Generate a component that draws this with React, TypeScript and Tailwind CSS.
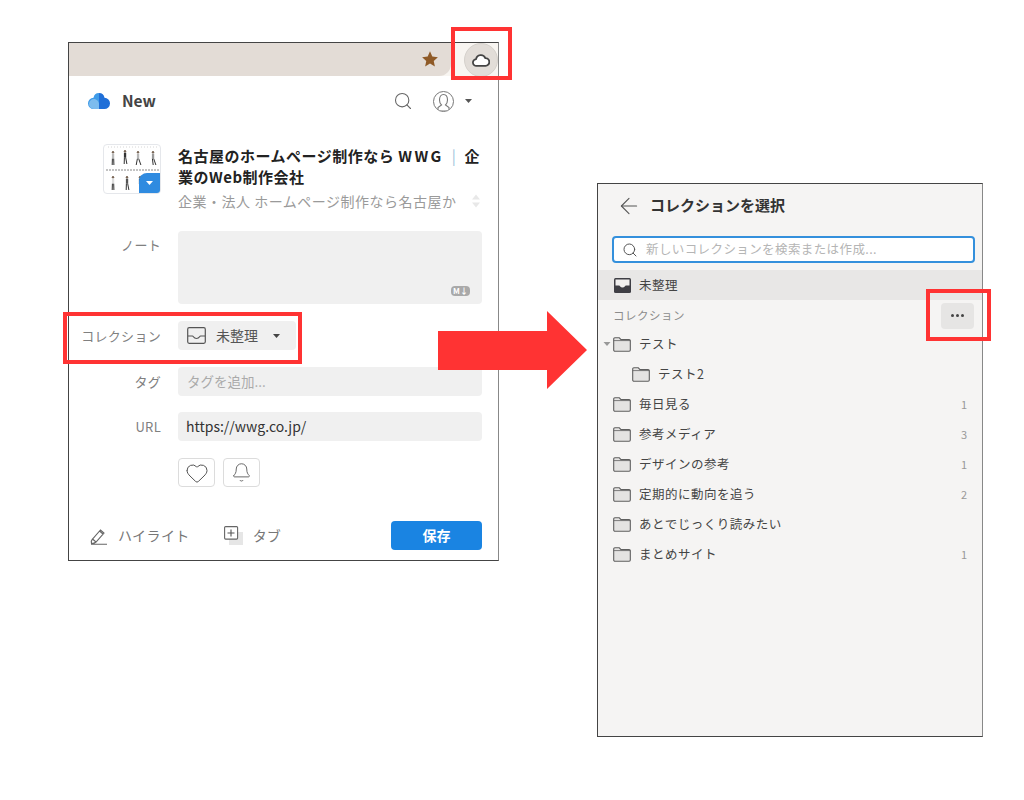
import { Search, Heart, Bell, ArrowLeft } from 'lucide-react';

const font = { fontFamily: '"Noto Sans CJK JP", "Noto Sans", sans-serif' };

const collections = [
  { name: '毎日見る', count: '1' },
  { name: '参考メディア', count: '3' },
  { name: 'デザインの参考', count: '1' },
  { name: '定期的に動向を追う', count: '2' },
  { name: 'あとでじっくり読みたい', count: '' },
  { name: 'まとめサイト', count: '1' },
];

const Caret = ({ className }: { className?: string }) => (
  <svg width="7" height="4" viewBox="0 0 7 4" className={className}>
    <path d="M0 0h7L3.5 4z" fill="currentColor" />
  </svg>
);

const FolderIcon = () => (
  <svg width="18" height="15" viewBox="0 0 18 15" className="shrink-0">
    <path d="M.7 13V2a1.2 1.2 0 0 1 1.2-1.2h4.4L8 2.6h8.1a1.2 1.2 0 0 1 1.2 1.2V13a1.2 1.2 0 0 1-1.2 1.2H1.9A1.2 1.2 0 0 1 .7 13z" fill="#e4e3e2" stroke="#5f5f5f" strokeWidth="1.1" />
    <path d="M.7 3.6h16.6" stroke="#5f5f5f" strokeWidth="0.8" />
  </svg>
);

// tiny figures in the page preview, l and r are the foot offsets
const Person = ({ x, y, l = 0, r = 0, top = '#a8a8a8' }: { x: number; y: number; l?: number; r?: number; top?: string }) => (
  <g transform={`translate(${x} ${y})`}>
    <circle cx="2" cy="1.3" r="1.2" fill="#7a6656" />
    <rect x="0.9" y="2.7" width="2.3" height="5" fill={top} />
    <path d={`M1.4 7.7L${1.2 + l} 14M2.700 7.700L${2.900 + r} 14`} stroke="#333" strokeWidth="1" />
  </g>
);

const Thumbnail = () => (
  <div className="relative w-[58px] h-[50px] shrink-0 rounded border border-gray-200 bg-white overflow-hidden">
    <svg width="58" height="50" viewBox="0 0 58 50">
      <path d="M4 2h50" stroke="#ccc" strokeWidth="0.8" strokeDasharray="1 2" />
      <Person x={7} y={6} top="#bbb" />
      <Person x={19} y={5} r={1} top="#333" />
      <Person x={32} y={6} l={-1} r={2} top="#b5b5b5" />
      <Person x={47} y={6} l={1} r={2} top="#999" />
      <path d="M2 25h54" stroke="#888" strokeWidth="1" strokeDasharray="2 1" />
      <Person x={7} y={31} top="#ddd" />
      <Person x={21} y={31} r={1} top="#555" />
      <Person x={34} y={31} l={1} top="#333" />
    </svg>
    <div className="absolute right-0 bottom-0 w-[21px] h-[20px] rounded-tl-lg bg-[#2f8be0] flex items-center justify-center text-white">
      <Caret />
    </div>
  </div>
);

const Label = ({ children }: { children: string }) => (
  <div className="w-[93px] pr-[1px] shrink-0 text-right text-[13px] tracking-[0.3px] text-[#808080]">{children}</div>
);

const PopupPanel = () => (
  <div className="w-[431px] h-[519px] shrink-0 flex flex-col border border-[#444] border-r-[#888] bg-white">
    {/* browser toolbar */}
    <div className="h-[33px] shrink-0 flex bg-[#f8f5f1]">
      <div className="flex-1 flex items-center justify-end rounded-br-xl bg-[#e3dcd6]">
        <svg width="18" height="18" viewBox="0 0 24 24" className="mr-[12px] -mt-[2px]">
          <path d="M12 1.8l3.1 6.9 7.4.8-5.500 5 1.500 7.400-6.500-3.800-6.500 3.800 1.500-7.400-5.500-5 7.400-.8z" fill="#8f5a27" />
        </svg>
      </div>
      <div className="w-[47px] flex items-center justify-end">
        <div className="w-[34px] h-[34px] rounded-full bg-[#e2ddd8] border border-[#d5d1cc] flex items-center justify-center">
          <svg width="18" height="14" viewBox="0 0 18 14">
            <path d="M4.600 12.900a3.400 3.400 0 0 1-.5-6.800 4.800 4.800 0 0 1 9.200-1 3.900 3.900 0 0 1 .2 7.800z" fill="white" stroke="#444" strokeWidth="1.800" strokeLinejoin="round" />
          </svg>
        </div>
      </div>
    </div>

    {/* header */}
    <div className="h-[50px] shrink-0 flex items-center pl-[19px] pr-[26px]">
      <svg width="22" height="18" viewBox="0 0 22 18">
        <path d="M11 1a5.600 5.600 0 0 1 5.500 4.800A5.600 5.600 0 0 1 16.300 17H11z" fill="#1f6fd8" />
        <path d="M11 1a5.600 5.600 0 0 0-5.500 4.800A5.600 5.600 0 0 0 5.700 17H11z" fill="#3f9be8" />
        <path d="M1 12a5 5 0 0 1 5-5c2.500 0 5 2.500 5 5v5H5.700A5 5 0 0 1 1 12z" fill="#7dbcee" />
      </svg>
      <div className="ml-[12px] text-[15.500px] font-bold text-[#444]">New</div>
      <Search size={20} strokeWidth={1.300} className="ml-auto text-[#666]" />
      <div className="ml-[20px] w-[21px] h-[21px] rounded-full border border-[#777] flex items-center justify-center overflow-hidden">
        <svg width="19" height="19" viewBox="0 0 19 19">
          <path d="M5.500 8c0-3 1.500-5.500 4-5.500s4 2.500 4 5.500-2 5-2 5l3.500 2.500v3.500H4v-3.500L7.500 13s-2-2-2-5z" fill="none" stroke="#777" strokeWidth="1.100" />
        </svg>
      </div>
      <Caret className="ml-[11px] text-[#555]" />
    </div>

    {/* page info */}
    <div className="flex pl-[34px] pr-[16px] pt-[18px]">
      <Thumbnail />
      <div className="ml-[17px] min-w-0 flex-1 pt-[1px]">
        <div className="text-[15px] leading-[21px] font-bold tracking-[0.5px] text-[#222]">
          名古屋のホームページ制作なら <span className="tracking-[2.500px]">WWG</span>
          <span className="mx-[8px] font-normal text-[#9cc3dc]">|</span>企業のWeb制作会社
        </div>
        <div className="mt-[4px] flex items-center justify-between text-[14px] leading-[20px] tracking-[0.500px] text-[#9a9a9a]">
          <span className="whitespace-nowrap">企業・法人 ホームページ制作なら名古屋か</span>
          <svg width="8" height="14" viewBox="0 0 8 14" className="shrink-0 text-[#e8e8e8] mr-[2px]">
            <path d="M0 5.500L4 .5l4 5zM0 8.500l4 5 4-5z" fill="currentColor" />
          </svg>
        </div>
      </div>
    </div>

    {/* form */}
    <div className="mt-[20px] flex flex-col pr-[16px]">
      <div className="flex gap-[16px]">
        <div className="pt-[4px]"><Label>ノート</Label></div>
        <div className="relative flex-1 h-[73px] rounded bg-[#f0f0f0]">
          <div className="absolute right-[12px] bottom-[8px] w-[19px] h-[10px] rounded-sm bg-[#a9a9a9] text-white flex items-center justify-center text-[8px] leading-none font-bold">M↓</div>
        </div>
      </div>
      <div className="mt-[17px] flex items-center gap-[16px]">
        <Label>コレクション</Label>
        <div className="w-[118px] h-[29px] rounded bg-[#f0f0f0] flex items-center pl-[9px]">
          <svg width="19" height="17" viewBox="0 0 19 17">
            <rect x="0.700" y="0.700" width="17.600" height="15.600" rx="1.500" fill="none" stroke="#555" strokeWidth="1.200" />
            <path d="M1 9h4.500c1 0 1 2.500 4 2.500s3-2.500 4-2.500H18" fill="none" stroke="#555" strokeWidth="1.200" />
          </svg>
          <span className="ml-[10px] text-[14px] text-[#555]">未整理</span>
          <Caret className="ml-[15px] text-[#444]" />
        </div>
      </div>
      <div className="mt-[17px] flex items-center gap-[16px]">
        <Label>タグ</Label>
        <div className="flex-1 h-[29px] rounded bg-[#f0f0f0] flex items-center pl-[9px] text-[13.500px] text-[#aaa]">タグを追加...</div>
      </div>
      <div className="mt-[16px] flex items-center gap-[16px]">
        <Label>URL</Label>
        <div className="flex-1 h-[29px] rounded bg-[#f0f0f0] flex items-center pl-[8px] text-[14px] text-[#333]">https://wwg.co.jp/</div>
      </div>
      <div className="mt-[17px] pl-[109px] flex gap-[8px]">
        <div className="w-[37px] h-[29px] rounded border border-[#dcdcdc] flex items-center justify-center text-[#555]">
          <Heart size={24} strokeWidth={1} />
        </div>
        <div className="w-[37px] h-[29px] rounded border border-[#dcdcdc] flex items-center justify-center text-[#555]">
          <Bell size={21} strokeWidth={1} />
        </div>
      </div>
    </div>

    {/* footer */}
    <div className="mt-[34px] flex items-center pl-[21px] pr-[16px]">
      <svg width="18" height="18" viewBox="0 0 18 18">
        <path d="M1.500 16.500c-.5-2 0-3.500 1-4.500l8-9 3.500 3-8 9c-1 1-2.500 1.500-4.500 1.500zM2.500 12l3.500 3M9.500 4l3.500 3M1 17.300h16" fill="none" stroke="#666" strokeWidth="1.100" />
      </svg>
      <span className="ml-[10px] text-[14px] tracking-[0.4px] text-[#777]">ハイライト</span>
      <svg width="19" height="19" viewBox="0 0 19 19" className="ml-[34px]">
        <rect x="5" y="6" width="14" height="13" fill="#e6e6e6" />
        <rect x="0.600" y="0.600" width="13" height="12.500" rx="1" fill="white" stroke="#666" strokeWidth="1.100" />
        <path d="M7 3.500v7M3.500 7h7" stroke="#555" strokeWidth="1.100" />
      </svg>
      <span className="ml-[10px] text-[14px] text-[#777]">タブ</span>
      <div className="ml-auto w-[91px] h-[29px] rounded bg-[#1a84e2] flex items-center justify-center text-[14px] font-bold text-white">保存</div>
    </div>
  </div>
);

const Row = ({ name, count }: { name: string; count?: string }) => (
  <div className="h-[30px] flex items-center pl-[15px] pr-[15px]">
    <FolderIcon />
    <span className="ml-[8px] text-[12.500px] tracking-[0.5px] text-[#444]">{name}</span>
    <span className="ml-auto text-[11px] text-[#999]">{count}</span>
  </div>
);

const CollectionPanel = () => (
  <div className="mt-[141px] w-[386px] h-[554px] shrink-0 flex flex-col border border-[#444] border-r-[#888] bg-[#f5f4f3]">
    <div className="h-[52px] shrink-0 flex items-center pl-[18px] pb-[9px]">
      <ArrowLeft size={26} strokeWidth={1} className="text-[#555]" />
      <span className="ml-[8px] text-[15px] font-bold text-[#333]">コレクションを選択</span>
    </div>
    <div className="ml-[14px] mr-[7px] h-[27px] shrink-0 flex items-center rounded border-2 border-[#3490dc] bg-white pl-[8px]">
      <Search size={16} strokeWidth={1.500} className="text-[#555]" />
      <span className="ml-[8px] text-[12.500px] tracking-[0.4px] text-[#b5b5b5]">新しいコレクションを検索または作成...</span>
    </div>
    <div className="mt-[7px] h-[30px] shrink-0 flex items-center bg-[#e8e7e6] pl-[16px]">
      <svg width="17" height="15" viewBox="0 0 17 15">
        <rect width="17" height="15" rx="1.500" fill="#3f3f45" />
        <path d="M1.500 1.500h14v6h-3.500c-1 0-1.200 2-3.500 2s-2.500-2-3.500-2H1.500z" fill="#f1f0ef" />
      </svg>
      <span className="ml-[8px] text-[12.500px] tracking-[0.5px] text-[#444]">未整理</span>
    </div>
    <div className="mt-[2px] h-[27px] shrink-0 flex items-center pl-[15px] pr-[8px]">
      <span className="text-[11.500px] tracking-[0.5px] text-[#8c8c8c]">コレクション</span>
      <div className="ml-auto w-[33px] h-[26px] rounded bg-[#e6e5e4] flex items-center justify-center gap-[2.500px]">
        <span className="w-[2.500px] h-[2.500px] rounded-full bg-[#444]" />
        <span className="w-[2.500px] h-[2.500px] rounded-full bg-[#444]" />
        <span className="w-[2.500px] h-[2.500px] rounded-full bg-[#444]" />
      </div>
    </div>
    <div className="h-[30px] flex items-center pl-[5px]">
      <Caret className="w-[8px] mr-[2px] text-[#999]" />
      <FolderIcon />
      <span className="ml-[8px] text-[12.500px] tracking-[0.5px] text-[#444]">テスト</span>
    </div>
    <div className="h-[30px] flex items-center pl-[34px]">
      <FolderIcon />
      <span className="ml-[8px] text-[12.500px] tracking-[0.5px] text-[#444]">テスト2</span>
    </div>
    {collections.map((c) => (
      <Row key={c.name} name={c.name} count={c.count} />
    ))}
  </div>
);

export default function App() {
  return (
    <div className="relative w-[1024px] h-[800px] overflow-hidden bg-white" style={font}>
      <div className="flex pl-[68px] pt-[42px] gap-[98px]">
        <PopupPanel />
        <CollectionPanel />
      </div>

      {/* annotations over the screenshots */}
      <div className="absolute left-[451px] top-[27px] w-[61px] h-[53px] border-4 border-[#ff3333]" />
      <div className="absolute left-[63px] top-[312px] w-[239px] h-[52px] border-4 border-[#ff3333]" />
      <div className="absolute left-[926px] top-[289px] w-[65px] h-[52px] border-4 border-[#ff3333]" />
      <svg width="150" height="78" viewBox="0 0 150 78" className="absolute left-[438px] top-[311px]">
        <path d="M0 20h109V0l40 39-40 39V59H0z" fill="#ff3333" />
      </svg>
    </div>
  );
}
